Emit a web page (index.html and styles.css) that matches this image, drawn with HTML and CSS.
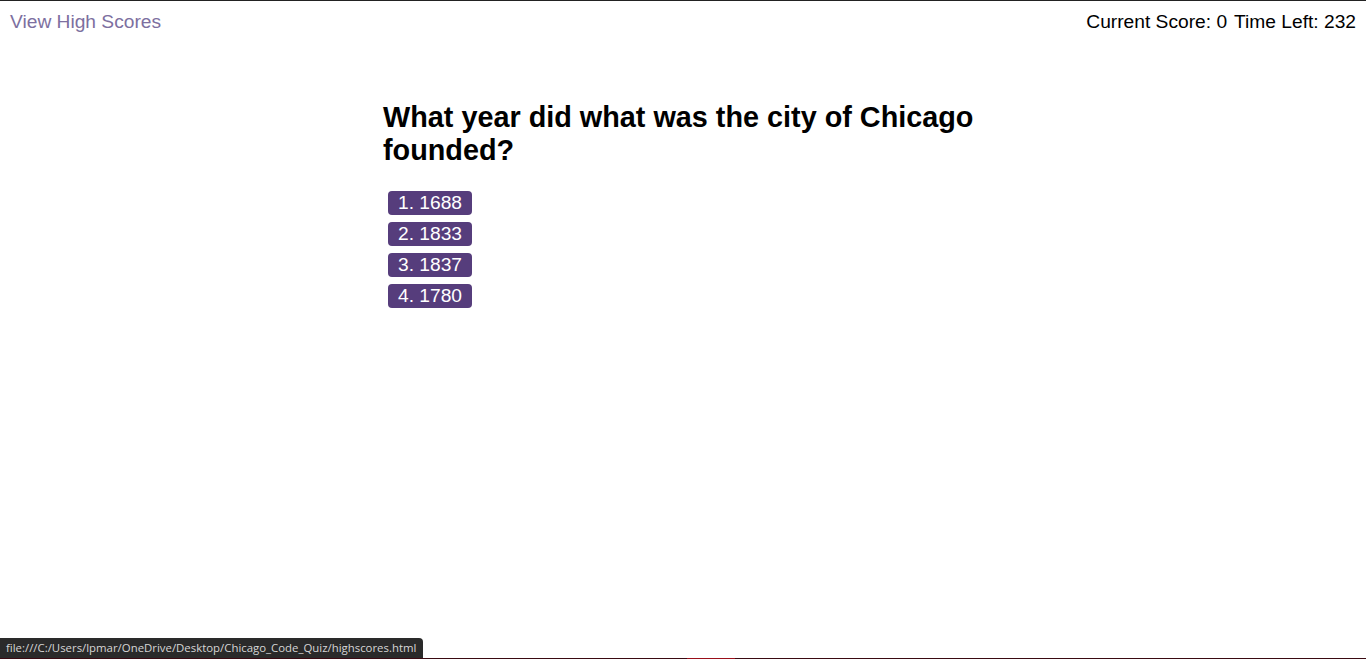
FILE: index.html
```html
<!DOCTYPE html>
<html>
<head>
<meta charset="utf-8">
<link rel="stylesheet" href="styles.css">
</head>
<body>
<div class="page">
  <header class="topbar">
    <a class="scores-link" href="#">View High Scores</a>
    <div class="stats">
      <span>Current Score: 0</span>
      <span>Time Left: 232</span>
    </div>
  </header>
  <main class="quiz">
    <h2 class="question">What year did what was the city of Chicago founded?</h2>
    <div class="answers">
      <button class="answer">1. 1688</button>
      <button class="answer">2. 1833</button>
      <button class="answer">3. 1837</button>
      <button class="answer">4. 1780</button>
    </div>
  </main>
</div>
<div class="statusbar">file:///C:/Users/lpmar/OneDrive/Desktop/Chicago_Code_Quiz/highscores.html</div>
<div class="bottomline"><span class="seg"></span></div>
</body>
</html>
```

FILE: styles.css
```css
html, body {
  margin: 0;
  padding: 0;
  height: 100%;
}
body {
  font-family: "Liberation Sans", Arial, sans-serif;
  background: #fff;
  color: #000;
  border-top: 1px solid #222;
  box-sizing: border-box;
  overflow: hidden;
  position: relative;
}
.topbar {
  display: flex;
  justify-content: space-between;
  align-items: center;
  padding: 10px 10px 0 10px;
  font-size: 19.2px;
  line-height: 22px;
}
.scores-link {
  color: #7d6fa0;
  text-decoration: none;
}
.stats {
  display: flex;
  gap: 7px;
}
.quiz {
  width: 600px;
  margin: 68px auto 0;
}
.question {
  font-size: 28.8px;
  line-height: 33px;
  font-weight: bold;
  margin: 0 0 24px 0;
}
.answers {
  display: flex;
  flex-direction: column;
  align-items: flex-start;
  gap: 7px;
  padding-left: 5px;
}
.answer {
  font-family: "Liberation Sans", Arial, sans-serif;
  font-size: 19.2px;
  line-height: 20px;
  color: #fff;
  background: #563d7c;
  border: none;
  border-radius: 4px;
  padding: 2px 10px;
  height: 24px;
  cursor: pointer;
}
.statusbar {
  position: absolute;
  left: 0;
  bottom: 1px;
  width: 423px;
  height: 20px;
  box-sizing: border-box;
  padding: 0 6px;
  background: #2a2a2a;
  color: #d6d6d6;
  font-family: "Open Sans", "Noto Sans", sans-serif;
  font-size: 11.4px;
  line-height: 20px;
  border-top-right-radius: 4px;
  white-space: nowrap;
}
.bottomline {
  position: absolute;
  left: 0;
  right: 0;
  bottom: 0;
  height: 1px;
  background: #3a0a12;
}
.seg {
  position: absolute;
  left: 687px;
  width: 48px;
  height: 1px;
  background: #9a0f1a;
}
```
